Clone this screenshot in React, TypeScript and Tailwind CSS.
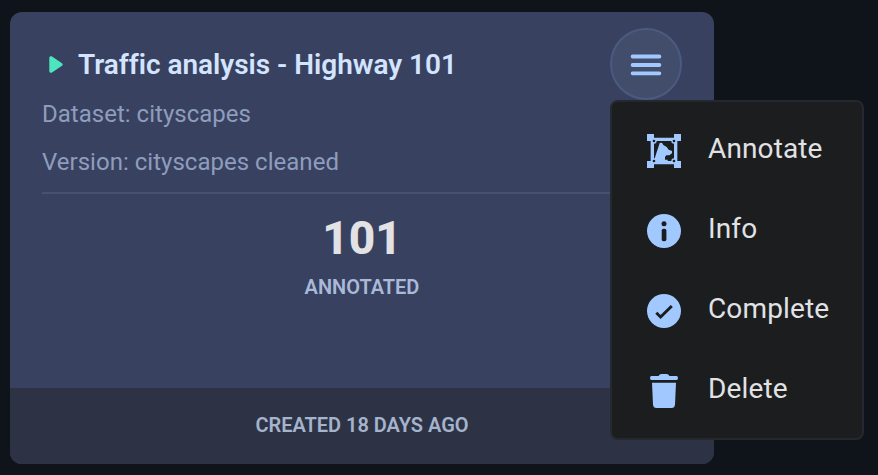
import type { ReactNode } from "react";

function AnnotateIcon() {
  return (
    <svg viewBox="0 0 102 102" className="size-[34px]" fill="#a2c9ff">
      <path
        fillRule="evenodd"
        d="M0 0H21V11H81V0H102V21H91V81H102V102H81V91H21V102H0V81H11V21H0ZM21 21V81H81V21Z"
      />
      <path d="M20 81C26 66 30 51 34 40L38 27L45 26L49 33L59 39L65 47L75 51V58L67 64H58L54 69V77H62V82H20Z" />
      <g fill="#1b1d1e" stroke="#a2c9ff" strokeWidth="4">
        <circle cx="21" cy="21" r="6" />
        <circle cx="81" cy="21" r="6" />
        <circle cx="21" cy="81" r="6" />
        <circle cx="81" cy="81" r="6" />
      </g>
    </svg>
  );
}

function InfoIcon() {
  return (
    <svg viewBox="0 0 34 34" className="size-[34px]">
      <circle cx="17" cy="17" r="17" fill="#a2c9ff" />
      <circle cx="17" cy="9.8" r="2.5" fill="#1b1d1e" />
      <rect x="14.7" y="14.7" width="4.7" height="12.6" rx="1.8" fill="#1b1d1e" />
    </svg>
  );
}

function CompleteIcon() {
  return (
    <svg viewBox="0 0 34 34" className="size-[34px]">
      <circle cx="17" cy="17" r="17" fill="#a2c9ff" />
      <path d="M9.3 18.8L13.6 23L24.8 12" fill="none" stroke="#1b1d1e" strokeWidth="3" />
    </svg>
  );
}

function DeleteIcon() {
  return (
    <svg viewBox="0 0 34 34" className="size-[34px]" fill="#a2c9ff">
      <path d="M4.5 2H11.5Q12.5 0 14.5 0H19.5Q21.5 0 22.5 2H29.5Q31 2 31 4T29.5 6H4.5Q3 6 3 4T4.5 2Z" />
      <path d="M5 8.7H29L28 30.5Q27.7 34 24.5 34H9.5Q6.3 34 6 30.5Z" />
    </svg>
  );
}

function MenuItem({ icon, label }: { icon: ReactNode; label: string }) {
  return (
    <button className="flex h-20 w-full items-center gap-[27px] pl-[35px] text-[28px] leading-10 tracking-[0.13px] text-[#e2e2e5]">
      <span className="mt-[5px]">{icon}</span>
      <span className="mt-[2px]">{label}</span>
    </button>
  );
}

export default function App() {
  return (
    <div className="relative h-[475px] w-[878px] overflow-hidden bg-[#0f141a] pt-3 pl-2.5 font-['Roboto',sans-serif]">
      <article className="flex h-[452px] w-[704px] flex-col overflow-hidden rounded-xl bg-[#394160]">
        <div className="flex-1 px-8 pt-4">
          <header className="flex h-[72px] items-center">
            <svg viewBox="0 0 14 17" className="ml-[7px] h-[17px] w-[14px]" fill="#4de5c0">
              <path d="M.3 2C.3.4 1.8-.2 3 .6L13 7.2Q14.5 8.5 13 9.8L3 16.4C1.8 17.2.3 16.6.3 15Z" />
            </svg>
            <h1 className="mt-[2px] ml-[15px] text-[28px] leading-10 font-semibold tracking-[-0.03px] text-[#d3e4ff]">
              Traffic analysis - Highway 101
            </h1>
            <button className="ml-auto flex size-[72px] items-center justify-center rounded-full border-2 border-[#4b5a80] bg-[#424d6b]">
              <svg viewBox="0 0 32 22" className="mt-[2px] h-[22px] w-8" stroke="#a2c9ff" strokeWidth="3.8" strokeLinecap="round">
                <path d="M2.6 2.5H29.4M2.6 11H29.4M2.6 19.3H29.4" />
              </svg>
            </button>
          </header>
          <div className="-mt-2.5 border-b-2 border-[#49526d] pb-[6px] text-2xl leading-[48px] tracking-[0.02px] text-[#8e9dbd]">
            <p>Dataset: cityscapes</p>
            <p>Version: cityscapes cleaned</p>
          </div>
          <div className="flex flex-col items-center pt-4">
            <strong className="text-[46px] leading-[56px] font-extrabold text-[#e2e2e5]">101</strong>
            <span className="mt-[7px] text-xl leading-7 font-semibold tracking-[-0.02px] text-[#a9bad9]">ANNOTATED</span>
          </div>
        </div>
        <footer className="flex h-[76px] items-center justify-center bg-[#2d3245] pb-[2px] text-xl font-semibold tracking-[-0.02px] text-[#a5b4cd]">
          CREATED 18 DAYS AGO
        </footer>
      </article>
      <nav className="absolute top-[100px] left-[610px] h-[340px] w-[254px] rounded-lg border-2 border-[#25292f] bg-[#1b1d1e] pt-[6px]">
        <MenuItem icon={<AnnotateIcon />} label="Annotate" />
        <MenuItem icon={<InfoIcon />} label="Info" />
        <MenuItem icon={<CompleteIcon />} label="Complete" />
        <MenuItem icon={<DeleteIcon />} label="Delete" />
      </nav>
    </div>
  );
}
